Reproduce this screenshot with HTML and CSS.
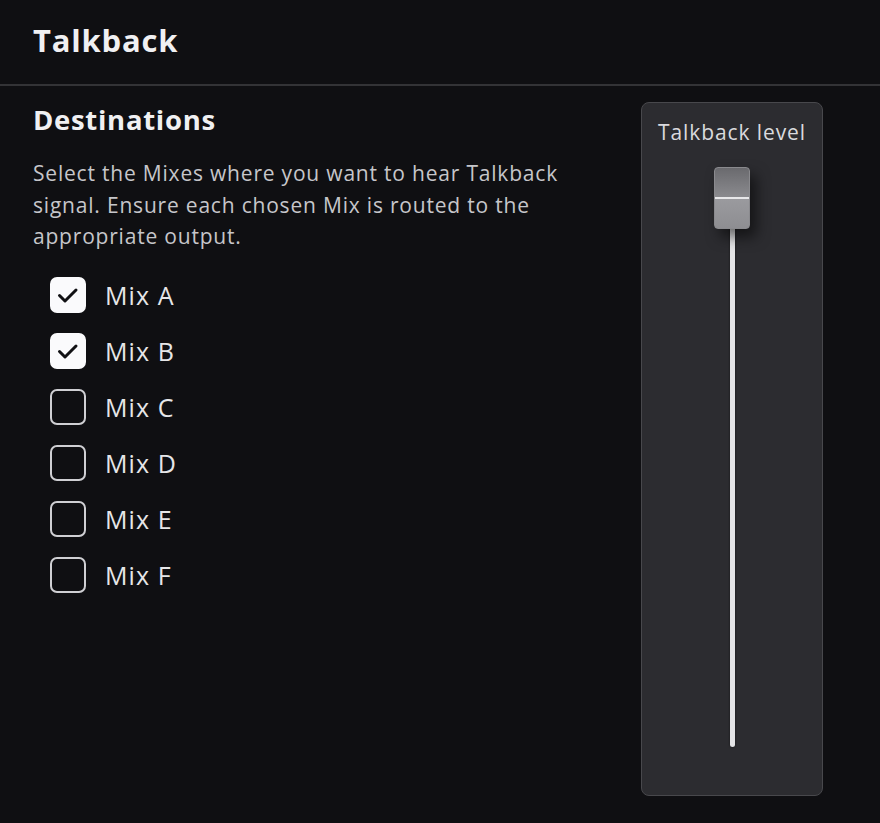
FILE: index.html
```html
<!DOCTYPE html>
<html lang="en">
<head>
    <meta charset="UTF-8" />
    <title>Talkback</title>
    <link rel="stylesheet" href="styles.css">
</head>
<body>
    <header class="top-bar">
        <h1>Talkback</h1>
    </header>

    <main class="content">
        <section class="destinations">
            <h2>Destinations</h2>
            <p class="desc">Select the Mixes where you want to hear Talkback signal. Ensure each chosen Mix is routed to the appropriate output.</p>

            <ul class="mix-list">
                <li class="mix checked"><span class="box"><svg viewBox="0 0 36 36"><path d="M9.5 18.5 L15 24 L26 13" /></svg></span>Mix A</li>
                <li class="mix checked"><span class="box"><svg viewBox="0 0 36 36"><path d="M9.5 18.5 L15 24 L26 13" /></svg></span>Mix B</li>
                <li class="mix"><span class="box"></span>Mix C</li>
                <li class="mix"><span class="box"></span>Mix D</li>
                <li class="mix"><span class="box"></span>Mix E</li>
                <li class="mix"><span class="box"></span>Mix F</li>
            </ul>
        </section>

        <aside class="level-panel">
            <div class="level-title">Talkback level</div>
            <div class="fader">
                <div class="track"></div>
                <div class="handle"></div>
            </div>
        </aside>
    </main>
</body>
</html>
```

FILE: styles.css
```css
* {
    margin: 0;
    padding: 0;
    box-sizing: border-box;
}

body,
html {
    height: 100%;
}

body {
    background: #0f0f12;
    color: #f0f0f2;
    font-family: "Open Sans", "Noto Sans", sans-serif;
}

.top-bar {
    height: 86px;
    border-bottom: 2px solid #333336;
    padding: 20px 33px 0;
}

.top-bar h1 {
    font-size: 31px;
    font-weight: 700;
    letter-spacing: 0.8px;
    line-height: 40px;
}

.content {
    display: flex;
    justify-content: space-between;
    padding: 16px 57px 0 33px;
}

.destinations h2 {
    font-size: 27.5px;
    font-weight: 700;
    letter-spacing: 0.7px;
    line-height: 36px;
    margin-bottom: 20px;
}

.desc {
    width: 560px;
    font-size: 21px;
    letter-spacing: 0.8px;
    line-height: 31.5px;
    color: #c6c6ca;
}

.mix-list {
    list-style: none;
    margin-top: 14px;
    padding-left: 17px;
}

.mix {
    display: flex;
    align-items: center;
    height: 56px;
    font-size: 25px;
    letter-spacing: 1.1px;
    color: #e6e6e8;
}

.box {
    width: 36px;
    height: 36px;
    border: 2.5px solid #cfcfd3;
    border-radius: 7px;
    margin-right: 19px;
    display: flex;
    align-items: center;
    justify-content: center;
}

.mix.checked .box {
    background: #fafafc;
    border-color: #fafafc;
}

.box svg {
    width: 36px;
    height: 36px;
    flex: none;
}

.box path {
    fill: none;
    stroke: #111114;
    stroke-width: 3;
    stroke-linecap: round;
    stroke-linejoin: round;
}

.level-panel {
    width: 182px;
    height: 694px;
    background: #2c2c30;
    border: 1.5px solid #48484c;
    border-radius: 8px;
    display: flex;
    flex-direction: column;
    align-items: center;
}

.level-title {
    font-size: 21px;
    letter-spacing: 0.9px;
    color: #dadade;
    margin-top: 15px;
    line-height: 28px;
    white-space: nowrap;
}

.fader {
    position: relative;
    width: 36px;
    height: 580px;
    margin-top: 21px;
}

.track {
    position: absolute;
    left: 16px;
    top: 30px;
    bottom: 0;
    width: 5px;
    border-radius: 3px;
    background: #e4e4e6;
    box-shadow: 0 0 2px #111;
}

.handle {
    position: absolute;
    left: 0;
    top: 0;
    width: 36px;
    height: 62px;
    border-radius: 4px;
    border: 1px solid #8a8a8e;
    background: linear-gradient(#6a6a6e, #8a8a8e 48%, #9a9a9e 52%, #8e8e92);
    box-shadow: 6px 8px 14px rgba(0, 0, 0, 0.55);
}

.handle::after {
    content: "";
    position: absolute;
    left: 0;
    right: 0;
    top: 29px;
    height: 2px;
    background: #e8e8ea;
}
```
